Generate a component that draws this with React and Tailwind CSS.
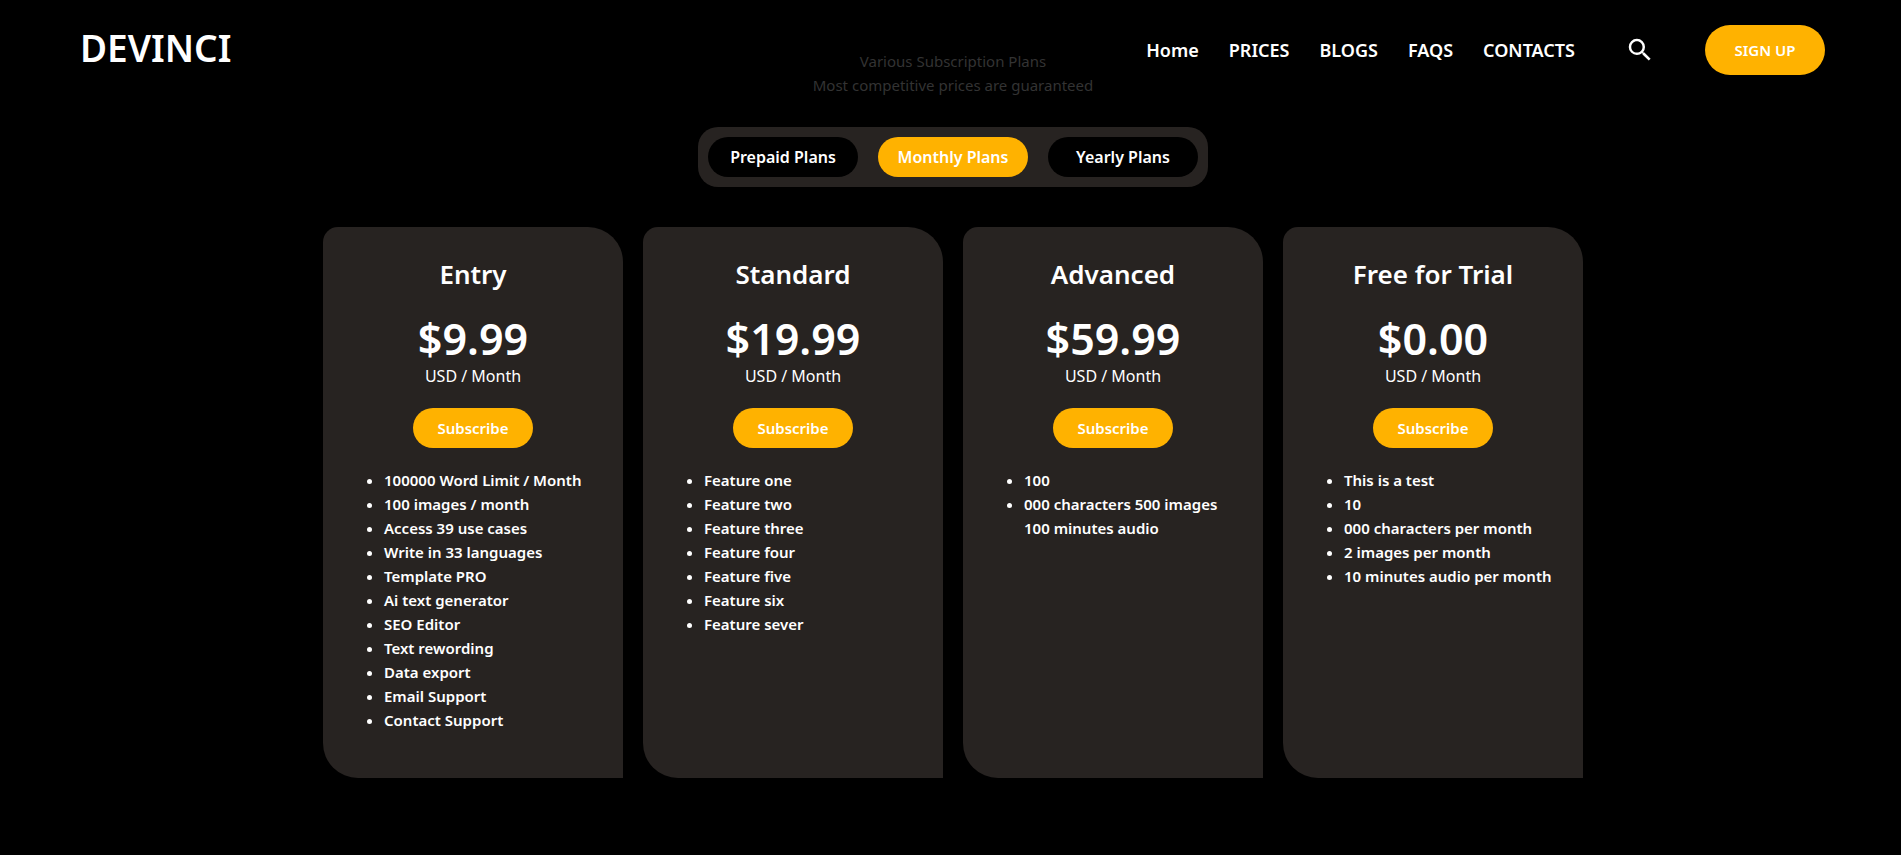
import { useState } from "react";
import { MdSearch } from "react-icons/md";

const links = ["Home", "PRICES", "BLOGS", "FAQS", "CONTACTS"];
const tabs = ["Prepaid Plans", "Monthly Plans", "Yearly Plans"];

const plans = [
  {
    name: "Entry",
    price: "$9.99",
    features: [
      "100000 Word Limit / Month",
      "100 images / month",
      "Access 39 use cases",
      "Write in 33 languages",
      "Template PRO",
      "Ai text generator",
      "SEO Editor",
      "Text rewording",
      "Data export",
      "Email Support",
      "Contact Support",
    ],
  },
  {
    name: "Standard",
    price: "$19.99",
    features: [
      "Feature one",
      "Feature two",
      "Feature three",
      "Feature four",
      "Feature five",
      "Feature six",
      "Feature sever",
    ],
  },
  {
    name: "Advanced",
    price: "$59.99",
    features: ["100", "000 characters 500 images 100 minutes audio"],
  },
  {
    name: "Free for Trial",
    price: "$0.00",
    features: [
      "This is a test",
      "10",
      "000 characters per month",
      "2 images per month",
      "10 minutes audio per month",
    ],
  },
];

function Header() {
  return (
    <header className="absolute inset-x-0 top-0 flex h-[100px] items-center justify-between pl-20 pr-[76px]">
      <a href="#" className="pb-1 text-[37px] leading-[50px] font-semibold">
        DEVINCI
      </a>
      <div className="flex items-center">
        <nav className="flex gap-[30px] text-[18px] leading-6 font-semibold">
          {links.map((link) => (
            <a key={link} href="#">
              {link}
            </a>
          ))}
        </nav>
        <button type="button" aria-label="Search" className="ml-[50px]">
          <MdSearch size={30} />
        </button>
        <button
          type="button"
          className="ml-[50px] h-[50px] w-[120px] rounded-[25px] bg-[#ffb200] text-[15px] font-semibold"
        >
          SIGN UP
        </button>
      </div>
    </header>
  );
}

function PlanCard({ plan }) {
  return (
    <article className="flex w-[300px] flex-col items-center rounded-tl-[15px] rounded-tr-[35px] rounded-bl-[35px] bg-[#272321] pt-[27px] pb-[46px]">
      <h2 className="text-[26px] leading-10 font-semibold">{plan.name}</h2>
      <p className="mt-5 text-[43px] leading-[50px] font-semibold">{plan.price}</p>
      <p className="text-[16px] leading-6">USD / Month</p>
      <button
        type="button"
        className="mt-5 h-10 w-[120px] rounded-[20px] bg-[#ffb200] text-[15px] font-semibold"
      >
        Subscribe
      </button>
      <ul className="mt-5 w-full list-disc pr-[25px] pl-[61px] text-[15px] leading-6 font-semibold">
        {plan.features.map((feature) => (
          <li key={feature}>{feature}</li>
        ))}
      </ul>
    </article>
  );
}

export default function App() {
  const [active, setActive] = useState("Monthly Plans");

  return (
    <div className="relative min-h-screen bg-black font-['Noto_Sans',sans-serif] text-white">
      <Header />
      <main className="flex flex-col items-center pt-[49px] pb-[60px] pl-[5px]">
        <p className="text-center text-[15px] leading-6 text-[#333333]">
          Various Subscription Plans
          <br />
          Most competitive prices are guaranteed
        </p>
        <div className="mt-[30px] flex gap-5 rounded-[20px] bg-[#272321] p-[10px]">
          {tabs.map((tab) => (
            <button
              key={tab}
              type="button"
              aria-pressed={tab === active}
              onClick={() => setActive(tab)}
              className={
                "h-10 w-[150px] rounded-[20px] text-[16px] font-semibold " +
                (tab === active ? "bg-[#ffb200]" : "bg-black")
              }
            >
              {tab}
            </button>
          ))}
        </div>
        <section className="mt-10 flex gap-5">
          {plans.map((plan) => (
            <PlanCard key={plan.name} plan={plan} />
          ))}
        </section>
      </main>
    </div>
  );
}
